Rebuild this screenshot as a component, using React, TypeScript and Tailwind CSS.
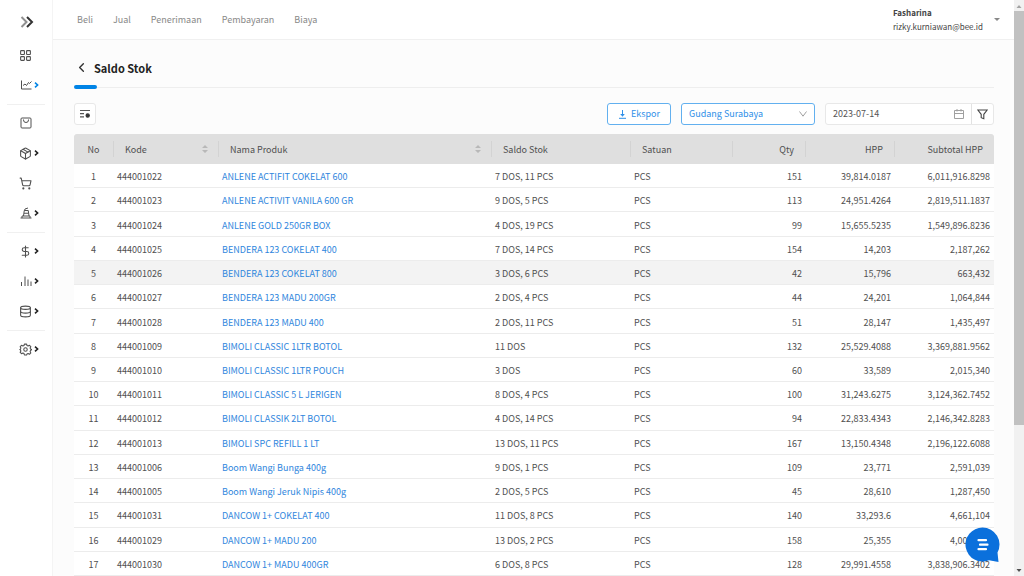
import React from "react";
import {ChevronLeft, Database, DollarSign, LayoutGrid, Package, ShoppingCart} from "lucide-react";

interface IStock {
    code: string
    name: string
    stock: string
    qty: string
    hpp: string
    subtotal: string
}

const stocks: IStock[] = [
    {code: '444001022', name: 'ANLENE ACTIFIT COKELAT 600', stock: '7 DOS, 11 PCS', qty: '151', hpp: '39,814.0187', subtotal: '6,011,916.8298'},
    {code: '444001023', name: 'ANLENE ACTIVIT VANILA 600 GR', stock: '9 DOS, 5 PCS', qty: '113', hpp: '24,951.4264', subtotal: '2,819,511.1837'},
    {code: '444001024', name: 'ANLENE GOLD 250GR BOX', stock: '4 DOS, 19 PCS', qty: '99', hpp: '15,655.5235', subtotal: '1,549,896.8236'},
    {code: '444001025', name: 'BENDERA 123 COKELAT 400', stock: '7 DOS, 14 PCS', qty: '154', hpp: '14,203', subtotal: '2,187,262'},
    {code: '444001026', name: 'BENDERA 123 COKELAT 800', stock: '3 DOS, 6 PCS', qty: '42', hpp: '15,796', subtotal: '663,432'},
    {code: '444001027', name: 'BENDERA 123 MADU 200GR', stock: '2 DOS, 4 PCS', qty: '44', hpp: '24,201', subtotal: '1,064,844'},
    {code: '444001028', name: 'BENDERA 123 MADU 400', stock: '2 DOS, 11 PCS', qty: '51', hpp: '28,147', subtotal: '1,435,497'},
    {code: '444001009', name: 'BIMOLI CLASSIC 1LTR BOTOL', stock: '11 DOS', qty: '132', hpp: '25,529.4088', subtotal: '3,369,881.9562'},
    {code: '444001010', name: 'BIMOLI CLASSIC 1LTR POUCH', stock: '3 DOS', qty: '60', hpp: '33,589', subtotal: '2,015,340'},
    {code: '444001011', name: 'BIMOLI CLASSIC 5 L JERIGEN', stock: '8 DOS, 4 PCS', qty: '100', hpp: '31,243.6275', subtotal: '3,124,362.7452'},
    {code: '444001012', name: 'BIMOLI CLASSIK 2LT BOTOL', stock: '4 DOS, 14 PCS', qty: '94', hpp: '22,833.4343', subtotal: '2,146,342.8283'},
    {code: '444001013', name: 'BIMOLI SPC REFILL 1 LT', stock: '13 DOS, 11 PCS', qty: '167', hpp: '13,150.4348', subtotal: '2,196,122.6088'},
    {code: '444001006', name: 'Boom Wangi Bunga 400g', stock: '9 DOS, 1 PCS', qty: '109', hpp: '23,771', subtotal: '2,591,039'},
    {code: '444001005', name: 'Boom Wangi Jeruk Nipis 400g', stock: '2 DOS, 5 PCS', qty: '45', hpp: '28,610', subtotal: '1,287,450'},
    {code: '444001031', name: 'DANCOW 1+ COKELAT 400', stock: '11 DOS, 8 PCS', qty: '140', hpp: '33,293.6', subtotal: '4,661,104'},
    {code: '444001029', name: 'DANCOW 1+ MADU 200', stock: '13 DOS, 2 PCS', qty: '158', hpp: '25,355', subtotal: '4,006,090'},
    {code: '444001030', name: 'DANCOW 1+ MADU 400GR', stock: '6 DOS, 8 PCS', qty: '128', hpp: '29,991.4558', subtotal: '3,838,906.3402'},
]

const columns = [
    {title: 'No', width: 'w-10', align: 'text-center'},
    {title: 'Kode', width: 'w-[105px]', align: 'text-left', sort: true},
    {title: 'Nama Produk', width: '', align: 'text-left', sort: true},
    {title: 'Saldo Stok', width: 'w-[139px]', align: 'text-left'},
    {title: 'Satuan', width: 'w-[102px]', align: 'text-left'},
    {title: 'Qty', width: 'w-[73px]', align: 'text-right'},
    {title: 'HPP', width: 'w-[89px]', align: 'text-right'},
    {title: 'Subtotal HPP', width: 'w-[99px]', align: 'text-right'},
]

const svgProps = {
    width: 12,
    height: 12,
    viewBox: '0 0 24 24',
    fill: 'none',
    stroke: 'currentColor',
    strokeWidth: 2,
}

const ChartIcon = () => (
    <svg {...svgProps}>
        <path d="M3 3v17h20M6 13l4-3 3 3 4-6 2 2 4-4"/>
    </svg>
)

const BagIcon = () => (
    <svg {...svgProps}>
        <rect x="2" y="2" width="20" height="20" rx="2"/>
        <path d="M7 5v1a5 5 0 0 0 10 0V5"/>
    </svg>
)

const FactoryIcon = () => (
    <svg {...svgProps}>
        <path d="M1 22h22M4 22v-4h16v4M7 18L8.500 7h8L18 18M8 12.500h9M9 7l1-3 6-2"/>
    </svg>
)

const BarsIcon = () => (
    <svg {...svgProps}>
        <path d="M3 22v-8M10 22V3M16 22V9M22 22v-9"/>
    </svg>
)

const GearIcon = () => (
    <svg {...svgProps} width="13" height="13">
        <circle cx="12" cy="12" r="3.2"/>
        <path d="M10 2h4l.8 2.6 2 .9 2.500-1.300 2.500 2.500-1.300 2.500.9 2 2.100.8-2.100 1.800-.9 2 1.300 2.500-2.500 2.500-2.500-1.300-2 .9L14 22h-4l-.8-2.600-2-.9-2.500 1.300-2.500-2.500 1.300-2.500-.9-2L1.500 12l1.100-.8.9-2-1.300-2.500 2.500-2.500 2.500 1.300 2-.9z" strokeLinejoin="round"/>
    </svg>
)

const menu = [
    [
        {label: 'Dashboard', icon: <LayoutGrid size={13}/>, arrow: ''},
        {label: 'Laporan', icon: <ChartIcon/>, arrow: 'text-[#0084e6]'},
    ],
    [
        {label: 'Produk', icon: <BagIcon/>, arrow: ''},
        {label: 'Persediaan', icon: <Package size={13}/>, arrow: 'text-[#222]'},
        {label: 'Pembelian', icon: <ShoppingCart size={13}/>, arrow: ''},
        {label: 'Produksi', icon: <FactoryIcon/>, arrow: 'text-[#222]'},
    ],
    [
        {label: 'Keuangan', icon: <DollarSign size={13}/>, arrow: 'text-[#222]'},
        {label: 'Analisa', icon: <BarsIcon/>, arrow: 'text-[#222]'},
        {label: 'Master', icon: <Database size={13}/>, arrow: 'text-[#222]'},
    ],
    [
        {label: 'Pengaturan', icon: <GearIcon/>, arrow: 'text-[#222]'},
    ],
]

const Sidebar = () => {
    return (
        <aside className="w-[53px] shrink-0 bg-white border-r border-[#f4f4f4] text-[#505050]">
            <button aria-label="Buka menu" className="flex h-10 w-full items-center pt-1 pl-5">
                <svg width="14" height="12" viewBox="0 0 14 12" fill="none" strokeWidth="2">
                    <path d="M1.5 1l5 5-5 5" stroke="#909090"/>
                    <path d="M7 1l5 5-5 5" stroke="#333"/>
                </svg>
            </button>
            <nav className="px-[7px]">
                {
                    menu.map((group, idx) => (
                        <div key={idx} className="pb-1 not-first:border-t not-first:border-[#f0f0f0] not-first:pt-[3px]">
                            {
                                group.map(item => (
                                    <button key={item.label} aria-label={item.label} className="flex h-[30px] w-full items-center gap-[2px] pl-3">
                                        <span className="flex w-[13px] shrink-0 justify-center">{item.icon}</span>
                                        {item.arrow && (
                                            <svg className={item.arrow} width="5" height="6" viewBox="0 0 5 6" fill="none" stroke="currentColor" strokeWidth="1.6">
                                                <path d="M1 .6L3.6 3 1 5.4"/>
                                            </svg>
                                        )}
                                    </button>
                                ))
                            }
                        </div>
                    ))
                }
            </nav>
        </aside>
    )
}

const Topbar = () => {
    return (
        <header className="flex h-10 shrink-0 items-center justify-between border-b border-[#f0f0f0] bg-white pl-6 pr-[14px]">
            <nav className="flex gap-5 text-[#888]">
                {
                    ['Beli', 'Jual', 'Penerimaan', 'Pembayaran', 'Biaya'].map(el => (
                        <a key={el} href="#">{el}</a>
                    ))
                }
            </nav>
            <button className="flex items-center gap-[7px] text-left text-[8px] leading-[14px] text-[#444]">
                <span className="w-[94px]">
                    <span className="block font-bold">Fasharina</span>
                    <span className="block">rizky.kurniawan@bee.id</span>
                </span>
                <svg width="6" height="3" viewBox="0 0 6 3" fill="#888">
                    <path d="M0 0h6L3 3z"/>
                </svg>
            </button>
        </header>
    )
}

const Toolbar = () => {
    return (
        <div className="mt-[14px] flex h-[22px] shrink-0 items-stretch gap-[10px]">
            <button aria-label="Atur kolom" className="mr-auto flex w-[22px] items-center justify-center rounded-[3px] border border-[#e8e8e8] bg-white">
                <svg width="12" height="12" viewBox="0 0 12 12" fill="none" stroke="#555" strokeWidth="1.2">
                    <path d="M1 2.5h10M1 5.7h4M1 8.9h4"/>
                    <circle cx="8.7" cy="7.5" r="1.6" fill="#333" stroke="#333"/>
                </svg>
            </button>
            <button className="flex w-16 items-center justify-center gap-1 rounded-[3px] border border-[#62b0ef] bg-white text-[#2f8fe8]">
                <svg width="9" height="9" viewBox="0 0 9 9" fill="none" stroke="currentColor">
                    <path d="M4.5 0v5M1 8.3h7"/>
                    <path d="M2.2 4h4.6L4.5 6.8z" fill="currentColor" stroke="none"/>
                </svg>
                Ekspor
            </button>
            <div className="relative w-[134px]">
                <select aria-label="Gudang" className="h-full w-full appearance-none rounded-[3px] border border-[#62b0ef] bg-white px-[7px] text-[#2f8fe8]">
                    <option>Gudang Surabaya</option>
                </select>
                <svg className="pointer-events-none absolute top-2 right-2" width="8" height="6" viewBox="0 0 8 6" fill="none" stroke="#a0a0a0">
                    <path d="M.5.5L4 5.2 7.5.5"/>
                </svg>
            </div>
            <div className="flex w-[169px] rounded-[3px] border border-[#e8e8e8] bg-white">
                <input aria-label="Tanggal" className="min-w-0 flex-1 pl-[7px] text-[#555]" defaultValue="2023-07-14"/>
                <span className="flex items-center pr-[7px]">
                    <svg width="10" height="10" viewBox="0 0 10 10" fill="none" stroke="#a0a0a0">
                        <path d="M.5 1.5h9v8h-9zM.5 4.5h9M3 0v2.5M7 0v2.5"/>
                    </svg>
                </span>
                <button aria-label="Filter" className="flex w-[22px] items-center justify-center border-l border-[#e2e2e2]">
                    <svg width="11" height="11" viewBox="0 0 11 11" fill="none" stroke="#444" strokeWidth="1.1">
                        <path d="M.8 1h9.4L6.8 5.3v4.4l-2.6-1V5.3z"/>
                    </svg>
                </button>
            </div>
        </div>
    )
}

const StockTable = () => {
    return (
        <div className="mt-[9px] min-h-0 flex-1">
            <table className="h-full w-full table-fixed border-separate border-spacing-0 bg-white text-[#505050]">
                <thead>
                    <tr className="h-[30px]">
                        {
                            columns.map((col, idx) => (
                                <th key={idx} className={`${col.width} ${col.align} h-[30px] bg-[#dfdfdf] p-0 font-normal first:rounded-tl-[3px] last:rounded-tr-[3px]`}>
                                    <div className={`${idx === 0 ? 'px-0' : 'px-[11px]'} ${idx < columns.length - 1 ? 'border-r border-[#d3d3d3]' : ''} relative h-4 leading-[18px]`}>
                                        {col.title}
                                        {col.sort && (
                                            <button aria-label={`Urutkan ${col.title}`} className="absolute top-1 right-[10px]">
                                                <svg width="6" height="8" viewBox="0 0 6 8" fill="#b8b8b8">
                                                    <path d="M3 0l3 3H0zM3 8L0 5h6z"/>
                                                </svg>
                                            </button>
                                        )}
                                    </div>
                                </th>
                            ))
                        }
                    </tr>
                </thead>
                <tbody className="[&_td]:border-b [&_td]:border-[#ececec] [&_td]:pl-[3px] [&_td]:pr-1 [&_td]:pt-[5px] [&_td]:pb-[3px] [&_td]:leading-[15px]">
                    {
                        stocks.map((item, idx) => (
                            <tr key={item.code} className={idx === 4 ? 'bg-[#f3f3f3]' : ''}>
                                <td className="text-center">{idx + 1}</td>
                                <td>{item.code}</td>
                                <td><a href="#" className="text-[#2f86dd]">{item.name}</a></td>
                                <td>{item.stock}</td>
                                <td>PCS</td>
                                <td className="text-right">{item.qty}</td>
                                <td className="text-right">{item.hpp}</td>
                                <td className="text-right">{item.subtotal}</td>
                            </tr>
                        ))
                    }
                </tbody>
            </table>
        </div>
    )
}

const Scrollbar = () => {
    return (
        <div className="flex w-[10px] shrink-0 flex-col items-center bg-[#f1f1f1]">
            <svg className="shrink-0" width="10" height="11" viewBox="0 0 10 11" fill="#a3a3a3">
                <path d="M5 5l2.5 3h-5z"/>
            </svg>
            <div className="w-full grow-[414] bg-[#c1c1c1]"/>
            <div className="grow-[140]"/>
            <svg className="shrink-0" width="10" height="11" viewBox="0 0 10 11" fill="#505050">
                <path d="M5 7L2.5 4h5z"/>
            </svg>
        </div>
    )
}

const App = () => {
    return (
        <div className="flex h-screen overflow-hidden bg-[#fcfcfc] font-['Noto_Sans_CJK_JP',sans-serif] text-[9px] leading-[14px]">
            <Sidebar/>
            <div className="flex min-w-0 flex-1 flex-col">
                <Topbar/>
                <main className="flex min-h-0 flex-1 flex-col pr-5 pl-[21px]">
                    <div className="flex h-[45px] shrink-0 items-center gap-[5px] pt-[10px]">
                        <button aria-label="Kembali" className="flex w-[15px] justify-center">
                            <ChevronLeft size={15} strokeWidth={2.2} className="text-[#333]"/>
                        </button>
                        <h1 className="text-[11px] font-bold text-[#222]">Saldo Stok</h1>
                    </div>
                    <div className="flex h-1 shrink-0 items-center">
                        <div className="h-1 w-[23px] rounded-full bg-[#0084e6]"/>
                        <div className="h-px flex-1 bg-[#eee]"/>
                    </div>
                    <Toolbar/>
                    <StockTable/>
                </main>
            </div>
            <Scrollbar/>
            <button aria-label="Chat" className="fixed right-6 bottom-[13px]">
                <svg width="35" height="36" viewBox="0 0 35 36">
                    <path d="M17.5.5a17 17 0 0 1 15 25l1 9.5-9.5-1.8A17 17 0 1 1 17.5.5z" fill="#0b70dc"/>
                    <path d="M13.5 13.200h7.500M15 17.700h7.500M13.500 22.200h7.500" stroke="#fff" strokeWidth="2.2" strokeLinecap="round"/>
                </svg>
            </button>
        </div>
    );
};

export default App;
